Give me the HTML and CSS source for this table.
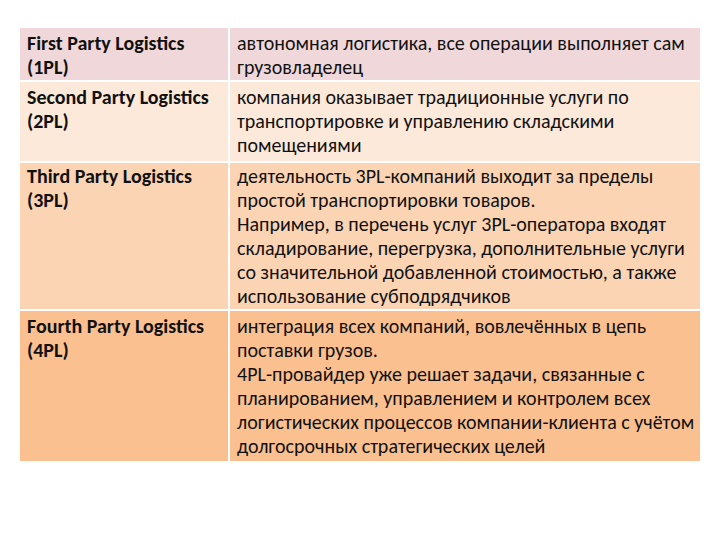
FILE: index.html
```html
<!DOCTYPE html>
<html lang="ru">
<head>
<meta charset="utf-8">
<title>Logistics</title>
<link rel="stylesheet" href="styles.css">
</head>
<body>
<div class="table">
  <div class="cell term r1">First Party Logistics (1PL)</div>
  <div class="cell desc r1">автономная логистика, все операции выполняет сам грузовладелец</div>
  <div class="cell term r2">Second Party Logistics (2PL)</div>
  <div class="cell desc r2">компания оказывает традиционные услуги по транспортировке и управлению складскими помещениями</div>
  <div class="cell term r3">Third Party Logistics (3PL)</div>
  <div class="cell desc r3">деятельность 3PL-компаний выходит за пределы простой транспортировки товаров.<br>Например, в перечень услуг 3PL-оператора входят складирование, перегрузка, дополнительные услуги со значительной добавленной стоимостью, а также использование субподрядчиков</div>
  <div class="cell term r4">Fourth Party Logistics (4PL)</div>
  <div class="cell desc r4">интеграция всех компаний, вовлечённых в цепь поставки грузов.<br>4PL-провайдер уже решает задачи, связанные с планированием, управлением и контролем всех логистических процессов компании-клиента с учётом долгосрочных стратегических целей</div>
</div>
</body>
</html>
```
FILE: styles.css
```css
html, body {
  margin: 0;
  background: #ffffff;
}
body {
  padding: 28px 0 0 20px;
  font-family: Carlito, "Open Sans", "Noto Sans", sans-serif;
  font-size: 20px;
  line-height: 24px;
  color: #111111;
}
.table {
  display: grid;
  grid-template-columns: 208px 470px;
  grid-template-rows: 52px 79px 146px 150px;
  gap: 2px;
  width: 680px;
}
.cell {
  padding: 3px 1px 0 7px;
}
.term {
  font-weight: bold;
}
.r1 { background: #f0d8da; }
.r2 { background: #fde9d9; }
.r3 { background: #fbd4b4; padding-top: 1px; }
.r4 { background: #fac090; }
```
